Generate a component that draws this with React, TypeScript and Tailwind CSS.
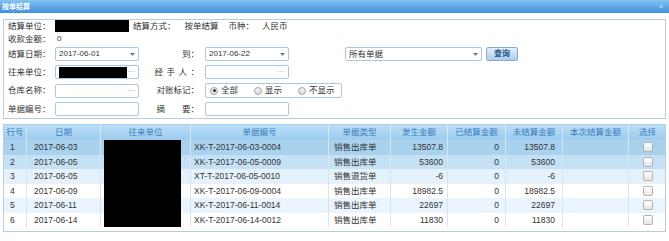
import React from 'react';

interface Row {
  no: number;
  date: string;
  code: string;
  type: string;
  amount: string;
  settled: string;
  unsettled: string;
  bg: string;
}

const rows: Row[] = [
  { no: 1, date: '2017-06-03', code: 'XK-T-2017-06-03-0004', type: '销售出库单', amount: '13507.8', settled: '0', unsettled: '13507.8', bg: 'bg-[#a9d2ef]' },
  { no: 2, date: '2017-06-05', code: 'XK-T-2017-06-05-0009', type: '销售出库单', amount: '53600', settled: '0', unsettled: '53600', bg: 'bg-[#c4e1f5]' },
  { no: 3, date: '2017-06-05', code: 'XT-T-2017-06-05-0010', type: '销售退货单', amount: '-6', settled: '0', unsettled: '-6', bg: 'bg-[#e5f2fc]' },
  { no: 4, date: '2017-06-09', code: 'XK-T-2017-06-09-0004', type: '销售出库单', amount: '18982.5', settled: '0', unsettled: '18982.5', bg: 'bg-white' },
  { no: 5, date: '2017-06-11', code: 'XK-T-2017-06-11-0014', type: '销售出库单', amount: '22697', settled: '0', unsettled: '22697', bg: 'bg-[#e9f4fc]' },
  { no: 6, date: '2017-06-14', code: 'XK-T-2017-06-14-0012', type: '销售出库单', amount: '11830', settled: '0', unsettled: '11830', bg: 'bg-white' },
];

const Arrow = () => (
  <svg width="5" height="3" viewBox="0 0 5 3" className="ml-auto">
    <path d="M0 0 L5 0 L2.5 3 Z" fill="#5a7da3" />
  </svg>
);

const Dots = () => <span className="ml-auto text-[8px] leading-none text-[#888]">···</span>;

const Label = ({ children }: { children: React.ReactNode }) => (
  <div className="w-[47px] shrink-0 whitespace-nowrap text-[8.5px] text-[#333]">{children}</div>
);

const Label2 = ({ children }: { children: React.ReactNode }) => (
  <div className="w-[66px] shrink-0 whitespace-nowrap pr-[6px] text-right text-[8.5px] text-[#333]">{children}</div>
);

const Box = ({ children, w = 'w-[84px]' }: { children?: React.ReactNode; w?: string }) => (
  <div className={`${w} h-[14px] shrink-0 flex items-center border border-[#a9c6e2] rounded-[2px] bg-white px-[3px] text-[8px] text-[#333]`}>
    {children}
  </div>
);

const Radio = ({ checked, label }: { checked?: boolean; label: string }) => (
  <div className="flex shrink-0 items-center gap-[3px]">
    <div className="w-[8px] h-[8px] shrink-0 rounded-full border border-[#9aa7b3] bg-gradient-to-b from-[#f4f4f4] to-[#dcdcdc] flex items-center justify-center">
      {checked && <div className="w-[3px] h-[3px] rounded-full bg-[#333]" />}
    </div>
    <span className="whitespace-nowrap text-[8.5px] text-[#333]">{label}</span>
  </div>
);

const cols = [
  { title: '行号', w: 'w-[23px]' },
  { title: '日期', w: 'w-[74px]' },
  { title: '往来单位', w: 'w-[90px]' },
  { title: '单据编号', w: 'w-[138px]' },
  { title: '单据类型', w: 'w-[62px]' },
  { title: '发生金额', w: 'w-[57px]' },
  { title: '已结算金额', w: 'w-[58px]' },
  { title: '未结算金额', w: 'w-[57px]' },
  { title: '本次结算金额', w: 'w-[66px]' },
  { title: '选择', w: 'w-[37px]' },
];

const cell = 'h-full shrink-0 flex items-center whitespace-nowrap border-r border-[#d6e5f2]';

export default function App() {
  return (
    <div className="w-[669px] h-[241px] bg-white overflow-hidden font-['Liberation_Sans','Noto_Sans_CJK_SC',sans-serif] leading-none">
      {/* Title bar */}
      <div className="h-[13px] flex items-center px-[2px] bg-gradient-to-b from-[#82c3f1] to-[#3e91db]">
        <span className="text-[7px] font-bold text-white">按单结算</span>
        <span className="ml-auto mr-[4px] text-[7px] text-[#cfe6f8]">×</span>
      </div>

      {/* Filter panel */}
      <div className="mx-[3px] mt-[6px] h-[100px] border border-[#b4cde3] pl-[4px]">
        <div className="h-[12px] flex items-center">
          <Label>结算单位：</Label>
          <div className="w-[74px] h-[12px] bg-black shrink-0" />
          <span className="ml-[4px] text-[8.5px] text-[#333]">结算方式：</span>
          <span className="ml-[9px] text-[8.5px] text-[#333]">按单结算</span>
          <span className="ml-[10px] text-[8.5px] text-[#333]">币种：</span>
          <span className="ml-[8px] text-[8.5px] text-[#333]">人民币</span>
        </div>
        <div className="h-[14px] flex items-center">
          <Label>收款金额：</Label>
          <span className="ml-[2px] text-[8px] text-[#333]">0</span>
        </div>
        <div className="mt-[1px] h-[14px] flex items-center">
          <Label>结算日期：</Label>
          <Box>
            2017-06-01
            <Arrow />
          </Box>
          <Label2>到：</Label2>
          <Box>
            2017-06-22
            <Arrow />
          </Box>
          <div className="w-[56px] shrink-0" />
          <Box w="w-[137px]">
            <span className="text-[8.5px]">所有单据</span>
            <Arrow />
          </Box>
          <div className="ml-[4px] w-[32px] h-[14px] flex items-center justify-center rounded-[2px] border border-[#86acd3] bg-gradient-to-b from-[#e3f0fb] to-[#a9cdee] text-[8px] font-bold text-[#1f4f85]">
            查询
          </div>
        </div>
        <div className="mt-[4px] h-[14px] flex items-center">
          <Label>往来单位：</Label>
          <Box>
            <div className="w-[70px] h-[11px] bg-black" />
            <Dots />
          </Box>
          <Label2>
            <span className="tracking-[3.5px]">经手人</span>：
          </Label2>
          <Box>
            <Dots />
          </Box>
        </div>
        <div className="mt-[4px] h-[15px] flex items-center">
          <Label>仓库名称：</Label>
          <Box>
            <Dots />
          </Box>
          <Label2>对账标记：</Label2>
          <div className="w-[137px] h-[15px] shrink-0 flex items-center gap-[16px] border border-[#a9c6e2] rounded-[2px] pl-[4px]">
            <Radio checked label="全部" />
            <Radio label="显示" />
            <Radio label="不显示" />
          </div>
        </div>
        <div className="mt-[4px] h-[14px] flex items-center">
          <Label>单据编号：</Label>
          <Box />
          <Label2>摘　　要：</Label2>
          <Box />
        </div>
      </div>

      {/* Grid */}
      <div className="mx-[3px] mt-[5px] border border-[#b4cde3]">
        <div className="h-[15px] flex bg-gradient-to-b from-[#b9def6] to-[#9dcbee]">
          {cols.map((c) => (
            <div
              key={c.title}
              className={`${c.w} h-full shrink-0 flex items-center justify-center whitespace-nowrap border-r border-[#d3eafa] last:border-r-0 text-[8.5px] text-[#3a7cc0]`}
            >
              {c.title}
            </div>
          ))}
        </div>
        {rows.map((r) => (
          <div key={r.no} className={`h-[14.5px] flex ${r.bg} text-[8.5px] text-[#333]`}>
            <div className={`${cell} w-[23px] pl-[6px]`}>{r.no}</div>
            <div className={`${cell} w-[74px] pl-[7px]`}>{r.date}</div>
            <div className={`${cell} w-[90px] pl-[3px]`}>
              <div className="w-[77px] h-full bg-black" />
            </div>
            <div className={`${cell} w-[138px] pl-[3px]`}>{r.code}</div>
            <div className={`${cell} w-[62px] pl-[5px]`}>{r.type}</div>
            <div className={`${cell} w-[57px] justify-end pr-[4px]`}>{r.amount}</div>
            <div className={`${cell} w-[58px] justify-end pr-[6px]`}>{r.settled}</div>
            <div className={`${cell} w-[57px] justify-end pr-[7px]`}>{r.unsettled}</div>
            <div className={`${cell} w-[66px]`} />
            <div className="w-[37px] h-full shrink-0 flex items-center justify-center">
              <div className="w-[10px] h-[10px] rounded-[2px] border border-[#aeb4ba] bg-gradient-to-b from-white to-[#e6e6e6]" />
            </div>
          </div>
        ))}
        <div className="h-[4px]" />
      </div>
    </div>
  );
}
